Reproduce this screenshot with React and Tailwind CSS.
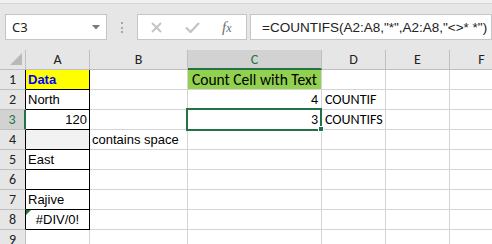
import React from "react";

const arial = "font-['Liberation_Sans',Arial,sans-serif] text-[13px] text-black";
const cal = "font-['Carlito','Lato',sans-serif] text-[14px] text-black";
const hdr = "font-['Carlito','Lato',sans-serif] text-[14px] text-[#222]";

function Cell({ className = "", children }) {
  return (
    <div className={"flex h-[20px] items-center whitespace-nowrap border-b border-r leading-[19px] " + className}>
      {children}
    </div>
  );
}

export default function App() {
  return (
    <div className="relative h-[244px] w-[492px] overflow-hidden bg-white">
      {/* Toolbar / formula bar */}
      <div className="h-[50px] bg-[#e6e6e6]">
        <div className="h-[3px] border-b border-[#d4d4d4] bg-[#f1f1f1] box-content" />
        <div className="mt-[10px] flex items-start pl-[5px]">
          <div className="flex h-[26px] w-[102px] items-center justify-between border border-[#c6c6c6] bg-white pl-[6px] pr-[6px]">
            <span className="font-['Noto_Sans',sans-serif] text-[13px] leading-none text-[#222]">C3</span>
            <svg width="8" height="5" viewBox="0 0 8 5">
              <polygon points="0,0 8,0 4,4.5" fill="#7a7a7a" />
            </svg>
          </div>
          <div className="ml-[14px] mt-[8px] flex w-[2px] flex-col gap-[2.5px]">
            <div className="h-[2px] w-[2px] bg-[#a6a6a6]" />
            <div className="h-[2px] w-[2px] bg-[#a6a6a6]" />
            <div className="h-[2px] w-[2px] bg-[#a6a6a6]" />
          </div>
          <div className="ml-[14px] flex h-[26px] w-[110px] items-center border border-[#c6c6c6] bg-white pl-[13px]">
            <svg width="11" height="11" viewBox="0 0 11 11">
              <path d="M1 1 L10 10 M10 1 L1 10" stroke="#c3c3c3" strokeWidth="1.8" fill="none" />
            </svg>
            <svg className="ml-[23px]" width="15" height="11" viewBox="0 0 15 11">
              <path d="M1 5.5 L5.5 10 L14 1" stroke="#c3c3c3" strokeWidth="2.2" fill="none" />
            </svg>
            <span className="ml-[22px] font-['Liberation_Serif',serif] text-[15px] italic leading-none text-[#6e6e6e]">
              f<span className="text-[12px]">x</span>
            </span>
          </div>
          <div className="ml-[3px] flex h-[26px] w-[242px] items-center border border-[#c6c6c6] bg-white pl-[11px] pt-[2px]">
            <span className="font-['Liberation_Sans',Arial,sans-serif] text-[13.5px] leading-none text-[#222]">
              =COUNTIFS(A2:A8,"*",A2:A8,"&lt;&gt;* *")
            </span>
          </div>
        </div>
      </div>

      {/* Sheet grid */}
      <div className="grid grid-cols-[26px_64px_98px_134px_64px_64px_64px]">
        {/* header row */}
        <Cell className="relative border-[#bfbfbf] bg-[#e6e6e6]">
          <svg className="absolute left-0 top-0" width="26" height="20" viewBox="0 0 26 20">
            <polygon points="22,3 22,15 10,15" fill="#b9b9b9" />
          </svg>
        </Cell>
        <Cell className={"justify-center border-[#bfbfbf] bg-[#e6e6e6] " + hdr}>A</Cell>
        <Cell className={"justify-center border-[#bfbfbf] bg-[#e6e6e6] " + hdr}>B</Cell>
        <Cell className={"justify-center border-b-2 border-r-[#bfbfbf] border-b-[#217346] bg-[#d2d2d2] font-['Carlito','Lato',sans-serif] text-[14px] text-[#217346]"}>C</Cell>
        <Cell className={"justify-center border-[#bfbfbf] bg-[#e6e6e6] " + hdr}>D</Cell>
        <Cell className={"justify-center border-[#bfbfbf] bg-[#e6e6e6] " + hdr}>E</Cell>
        <Cell className={"justify-center border-[#bfbfbf] bg-[#e6e6e6] " + hdr}>F</Cell>

        {/* row 1 */}
        <Cell className={"justify-center border-b-[#bfbfbf] border-r-black bg-[#e6e6e6] " + hdr}>1</Cell>
        <Cell className={"border-black bg-[#ffff00] pl-[2px] font-['Liberation_Sans',Arial,sans-serif] text-[13px] font-bold text-[#0000ff]"}>Data</Cell>
        <Cell className="border-[#d4d4d4]" />
        <Cell className={"justify-center border-[#d4d4d4] bg-[#92d050] font-['Carlito','Lato',sans-serif] text-[15.5px] text-black"}>Count Cell with Text</Cell>
        <Cell className="border-[#d4d4d4]" />
        <Cell className="border-[#d4d4d4]" />
        <Cell className="border-[#d4d4d4]" />

        {/* row 2 */}
        <Cell className={"justify-center border-b-[#bfbfbf] border-r-black bg-[#e6e6e6] " + hdr}>2</Cell>
        <Cell className={"border-black pl-[2px] " + arial}>North</Cell>
        <Cell className="border-[#d4d4d4]" />
        <Cell className={"justify-end border-[#d4d4d4] pr-[3px] " + cal}>4</Cell>
        <Cell className={"border-[#d4d4d4] pl-[3px] " + cal}>COUNTIF</Cell>
        <Cell className="border-[#d4d4d4]" />
        <Cell className="border-[#d4d4d4]" />

        {/* row 3 */}
        <Cell className={"justify-center border-r-2 border-b-[#bfbfbf] border-r-[#217346] bg-[#d2d2d2] font-['Carlito','Lato',sans-serif] text-[14px] text-[#217346]"}>3</Cell>
        <Cell className={"justify-end border-black pr-[2px] " + arial}>120</Cell>
        <Cell className="border-[#d4d4d4]" />
        <Cell className={"relative justify-end border-[#d4d4d4] pr-[3px] " + cal}>
          3
          <div className="absolute left-[-2px] top-[-2px] h-[23px] w-[136px] border-2 border-[#217346]" />
          <div className="absolute left-[130px] top-[16px] h-[6px] w-[6px] border border-white bg-[#217346]" />
        </Cell>
        <Cell className={"border-[#d4d4d4] pl-[3px] " + cal}>COUNTIFS</Cell>
        <Cell className="border-[#d4d4d4]" />
        <Cell className="border-[#d4d4d4]" />

        {/* row 4 */}
        <Cell className={"justify-center border-b-[#bfbfbf] border-r-black bg-[#e6e6e6] " + hdr}>4</Cell>
        <Cell className="border-black bg-[#f2f2f2]" />
        <Cell className={"border-[#d4d4d4] pl-[2px] " + arial}>contains space</Cell>
        <Cell className="border-[#d4d4d4]" />
        <Cell className="border-[#d4d4d4]" />
        <Cell className="border-[#d4d4d4]" />
        <Cell className="border-[#d4d4d4]" />

        {/* row 5 */}
        <Cell className={"justify-center border-b-[#bfbfbf] border-r-black bg-[#e6e6e6] " + hdr}>5</Cell>
        <Cell className={"border-black pl-[2px] " + arial}>East</Cell>
        <Cell className="border-[#d4d4d4]" />
        <Cell className="border-[#d4d4d4]" />
        <Cell className="border-[#d4d4d4]" />
        <Cell className="border-[#d4d4d4]" />
        <Cell className="border-[#d4d4d4]" />

        {/* row 6 */}
        <Cell className={"justify-center border-b-[#bfbfbf] border-r-black bg-[#e6e6e6] " + hdr}>6</Cell>
        <Cell className="border-black" />
        <Cell className="border-[#d4d4d4]" />
        <Cell className="border-[#d4d4d4]" />
        <Cell className="border-[#d4d4d4]" />
        <Cell className="border-[#d4d4d4]" />
        <Cell className="border-[#d4d4d4]" />

        {/* row 7 */}
        <Cell className={"justify-center border-b-[#bfbfbf] border-r-black bg-[#e6e6e6] " + hdr}>7</Cell>
        <Cell className={"border-black pl-[2px] " + arial}>Rajive</Cell>
        <Cell className="border-[#d4d4d4]" />
        <Cell className="border-[#d4d4d4]" />
        <Cell className="border-[#d4d4d4]" />
        <Cell className="border-[#d4d4d4]" />
        <Cell className="border-[#d4d4d4]" />

        {/* row 8 */}
        <Cell className={"justify-center border-b-[#bfbfbf] border-r-black bg-[#e6e6e6] " + hdr}>8</Cell>
        <Cell className={"relative justify-center border-black " + arial}>
          <div className="absolute left-0 top-0 h-0 w-0 border-r-[5px] border-t-[5px] border-r-transparent border-t-[#1e7b34]" />
          #DIV/0!
        </Cell>
        <Cell className="border-[#d4d4d4]" />
        <Cell className="border-[#d4d4d4]" />
        <Cell className="border-[#d4d4d4]" />
        <Cell className="border-[#d4d4d4]" />
        <Cell className="border-[#d4d4d4]" />

        {/* row 9 */}
        <Cell className={"justify-center border-[#bfbfbf] bg-[#e6e6e6] " + hdr}>9</Cell>
        <Cell className="border-[#d4d4d4]" />
        <Cell className="border-[#d4d4d4]" />
        <Cell className="border-[#d4d4d4]" />
        <Cell className="border-[#d4d4d4]" />
        <Cell className="border-[#d4d4d4]" />
        <Cell className="border-[#d4d4d4]" />
      </div>
    </div>
  );
}
